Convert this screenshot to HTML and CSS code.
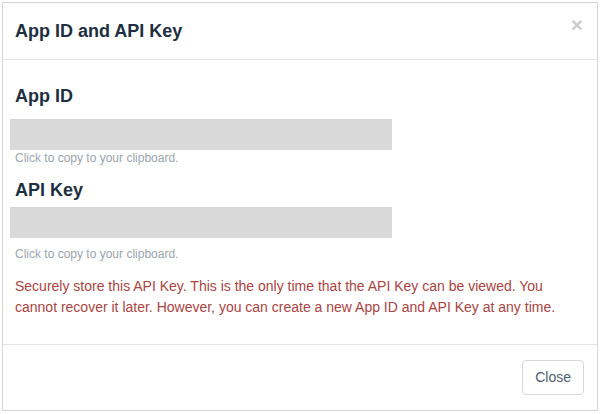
FILE: index.html
```html
<!DOCTYPE html>
<html>
<head>
<meta charset="utf-8">
<link rel="stylesheet" href="styles.css">
</head>
<body>
<div class="modal">
  <div class="modal-header">
    <h4 class="modal-title">App ID and API Key</h4>
    <button class="close" type="button">&times;</button>
  </div>
  <div class="modal-body">
    <h3 class="section-title first">App ID</h3>
    <div class="copy-field field-one"></div>
    <div class="help">Click to copy to your clipboard.</div>
    <h3 class="section-title second">API Key</h3>
    <div class="copy-field field-two"></div>
    <div class="help help-two">Click to copy to your clipboard.</div>
    <p class="warning">Securely store this API Key. This is the only time that the API Key can be viewed. You cannot recover it later. However, you can create a new App ID and API Key at any time.</p>
  </div>
  <div class="modal-footer">
    <button class="btn" type="button">Close</button>
  </div>
</div>
</body>
</html>
```

FILE: styles.css
```css
html, body {
  margin: 0;
  padding: 0;
  background: #ffffff;
}

body {
  font-family: "Liberation Sans", Arial, sans-serif;
  padding: 2px;
}

.modal {
  box-sizing: border-box;
  width: 596px;
  height: 409px;
  border: 1px solid #d6d6d6;
  background: #fff;
  display: flex;
  flex-direction: column;
}

.modal-header {
  display: flex;
  justify-content: space-between;
  align-items: flex-start;
  padding: 15px 14px 15px 12px;
  border-bottom: 1px solid #e5e5e5;
}

.modal-title {
  margin: 0;
  font-size: 18px;
  line-height: 26px;
  font-weight: bold;
  color: #1e2f3f;
}

.close {
  border: 0;
  background: transparent;
  padding: 0;
  margin: 0;
  font-family: "Liberation Sans", Arial, sans-serif;
  font-size: 21px;
  font-weight: bold;
  line-height: 13px;
  color: #000;
  opacity: 0.2;
}

.modal-body {
  flex: 1;
  padding: 0 15px 0 12px;
  display: flex;
  flex-direction: column;
  align-items: flex-start;
}

.section-title {
  margin: 0;
  font-size: 18px;
  line-height: 20px;
  font-weight: bold;
  color: #1e2f3f;
}

.section-title.first {
  margin-top: 26px;
}

.section-title.second {
  margin-top: 13px;
}

.copy-field {
  width: 382px;
  height: 31px;
  margin-left: -5px;
  background: #d9d9d9;
}

.field-one {
  margin-top: 13px;
}

.field-two {
  margin-top: 7px;
}

.help {
  font-size: 12px;
  line-height: 17px;
  color: #9ca4ac;
}

.help-two {
  margin-top: 8px;
}

.warning {
  margin: 13px 0 0 0;
  font-size: 14px;
  line-height: 21px;
  color: #a94442;
}

.modal-footer {
  display: flex;
  justify-content: flex-end;
  padding: 15px 13px 15px 15px;
  border-top: 1px solid #e5e5e5;
}

.btn {
  font-family: "Liberation Sans", Arial, sans-serif;
  font-size: 14px;
  line-height: 21px;
  padding: 6px 12px;
  border: 1px solid #d5d9de;
  border-radius: 4px;
  background: #fff;
  color: #4f5d6d;
}
```
